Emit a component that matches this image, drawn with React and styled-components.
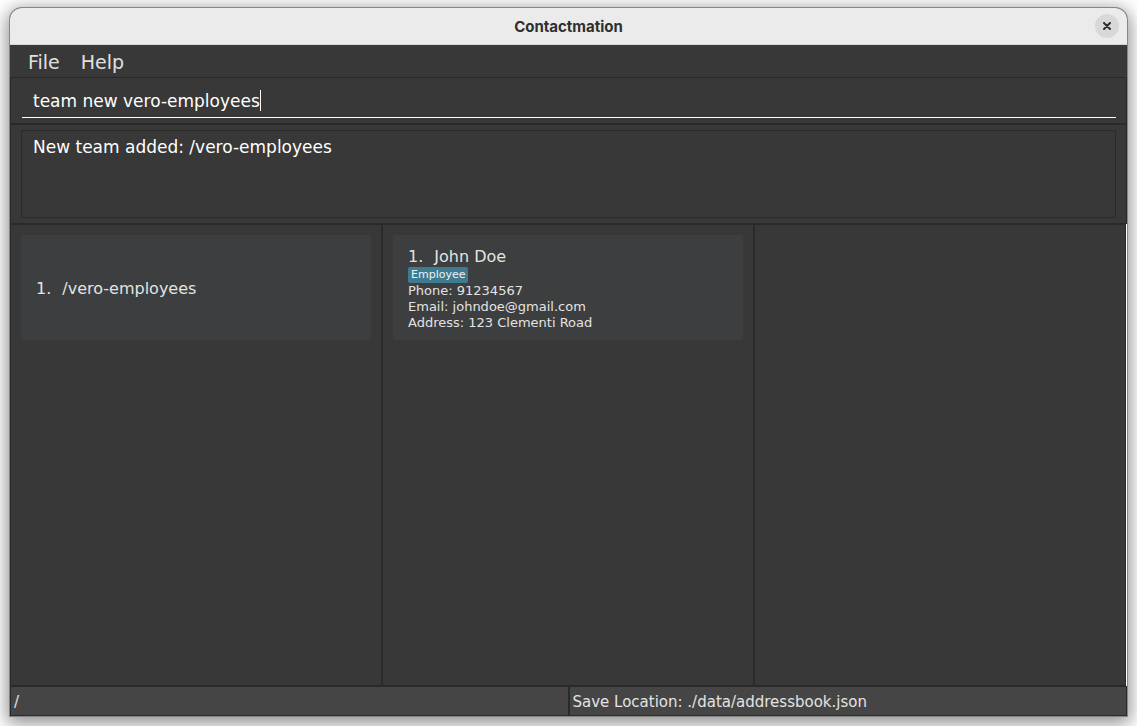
import React, { useState } from "react";
import styled, { createGlobalStyle } from "styled-components";

const GlobalStyle = createGlobalStyle`
  *, *::before, *::after { box-sizing: border-box; }
  body {
    margin: 0;
    background: #ffffff;
    font-family: "DejaVu Sans", sans-serif;
    color: #e3e3e3;
  }
`;

const Desktop = styled.div`
  display: flex;
  min-height: 100vh;
  padding: 8px 10px 10px;
  overflow: hidden;
`;

const AppWindow = styled.div`
  flex: 1;
  min-width: 0;
  display: flex;
  flex-direction: column;
  background: #383838;
  border-radius: 12px 12px 0 0;
  box-shadow: 0 0 0 1px #868686, 0 4px 18px 3px rgba(0, 0, 0, 0.45);
`;

const TitleBar = styled.header`
  display: grid;
  grid-template-columns: 1fr auto 1fr;
  align-items: center;
  height: 37px;
  padding: 0 8px;
  background: #ebebeb;
  border-bottom: 1px solid #d5d5d5;
  border-radius: 12px 12px 0 0;
`;

const Title = styled.h1`
  grid-column: 2;
  margin: 0;
  padding-top: 2px;
  font: 700 15px/20px Inter, sans-serif;
  color: #2f2f2f;
`;

const CloseButton = styled.button`
  justify-self: end;
  display: grid;
  place-items: center;
  width: 24px;
  height: 24px;
  padding: 0;
  border: 0;
  border-radius: 50%;
  background: #d8d8d8;
  color: #2e2e2e;
`;

const MenuBar = styled.nav`
  display: flex;
  gap: 5px;
  height: 32px;
  padding: 0 10px;
`;

const MenuButton = styled.button`
  padding: 2px 8px 0;
  border: 0;
  background: transparent;
  color: #e0e0e0;
  font: 19px/30px "DejaVu Sans", sans-serif;
`;

const Pane = styled.section`
  padding: 5px 10px;
  border: 1px solid #2a2a2a;
`;

const CommandLine = styled.div`
  display: flex;
  align-items: center;
  height: 35px;
  margin-left: 1px;
  padding: 1px 11px 0;
  border-bottom: 1px solid #ffffff;
`;

const CommandInput = styled.input`
  field-sizing: content;
  max-width: 100%;
  padding: 0;
  border: 0;
  outline: 0;
  background: transparent;
  color: #ffffff;
  caret-color: transparent;
  font: 17px/20px "DejaVu Sans", sans-serif;
`;

const Caret = styled.span`
  width: 1px;
  height: 21px;
  background: #ffffff;
`;

const ResultBox = styled.output`
  display: block;
  min-height: 88px;
  padding: 6px 11px;
  border: 1px solid #2a2a2a;
  color: #ffffff;
  font-size: 17px;
  line-height: 20px;
`;

const Lists = styled.main`
  flex: 1;
  display: grid;
  grid-template-columns: repeat(3, 1fr);
  border-right: 1px solid #ffffff;
`;

const Card = styled.article`
  display: flex;
  flex-direction: column;
  justify-content: center;
  align-items: flex-start;
  min-height: 105px;
  padding: 7px 15px 5px;
  background: #3c3e3f;
  font-size: 13px;
  line-height: 16px;
`;

const ListPane = styled(Pane)`
  padding: 10px;
`;

const CardHeading = styled.h2`
  display: flex;
  gap: 11px;
  margin: 0;
  font-size: 16px;
  font-weight: 400;
  line-height: 20px;
`;

const Tag = styled.span`
  padding: 0 3px;
  border-radius: 2px;
  background: #3e7b91;
  color: #f0f0f0;
  font-size: 11px;
`;

const StatusBar = styled.footer`
  display: grid;
  grid-template-columns: repeat(2, 1fr);
`;

const StatusCell = styled.div`
  height: 30px;
  padding: 0 3px;
  border: 1px solid #2a2a2a;
  background: #454545;
  font-size: 15px;
  line-height: 30px;
`;

function ItemCard({ index, name, tag, details = [] }) {
  return (
    <Card>
      <CardHeading>
        <span>{index}.</span>
        <span>{name}</span>
      </CardHeading>
      {tag && <Tag>{tag}</Tag>}
      {details.map((line) => (
        <span key={line}>{line}</span>
      ))}
    </Card>
  );
}

export default function App() {
  const [command, setCommand] = useState("team new vero-employees");
  return (
    <>
      <GlobalStyle />
      <Desktop>
        <AppWindow>
          <TitleBar>
            <Title>Contactmation</Title>
            <CloseButton aria-label="Close">
              <svg width="8" height="8" viewBox="0 0 8 8" fill="none" stroke="currentColor" strokeWidth="2" strokeLinecap="round">
                <path d="M1 1l6 6M7 1l-6 6" />
              </svg>
            </CloseButton>
          </TitleBar>
          <MenuBar>
            <MenuButton>File</MenuButton>
            <MenuButton>Help</MenuButton>
          </MenuBar>
          <Pane>
            <CommandLine>
              <CommandInput
                aria-label="Command"
                value={command}
                onChange={(event) => setCommand(event.target.value)}
              />
              <Caret />
            </CommandLine>
          </Pane>
          <Pane>
            <ResultBox>New team added: /vero-employees</ResultBox>
          </Pane>
          <Lists>
            <ListPane>
              <ItemCard index={1} name="/vero-employees" />
            </ListPane>
            <ListPane>
              <ItemCard
                index={1}
                name="John Doe"
                tag="Employee"
                details={[
                  "Phone: 91234567",
                  "Email: johndoe@gmail.com",
                  "Address: 123 Clementi Road",
                ]}
              />
            </ListPane>
            <ListPane />
          </Lists>
          <StatusBar>
            <StatusCell>/</StatusCell>
            <StatusCell>Save Location: ./data/addressbook.json</StatusCell>
          </StatusBar>
        </AppWindow>
      </Desktop>
    </>
  );
}
